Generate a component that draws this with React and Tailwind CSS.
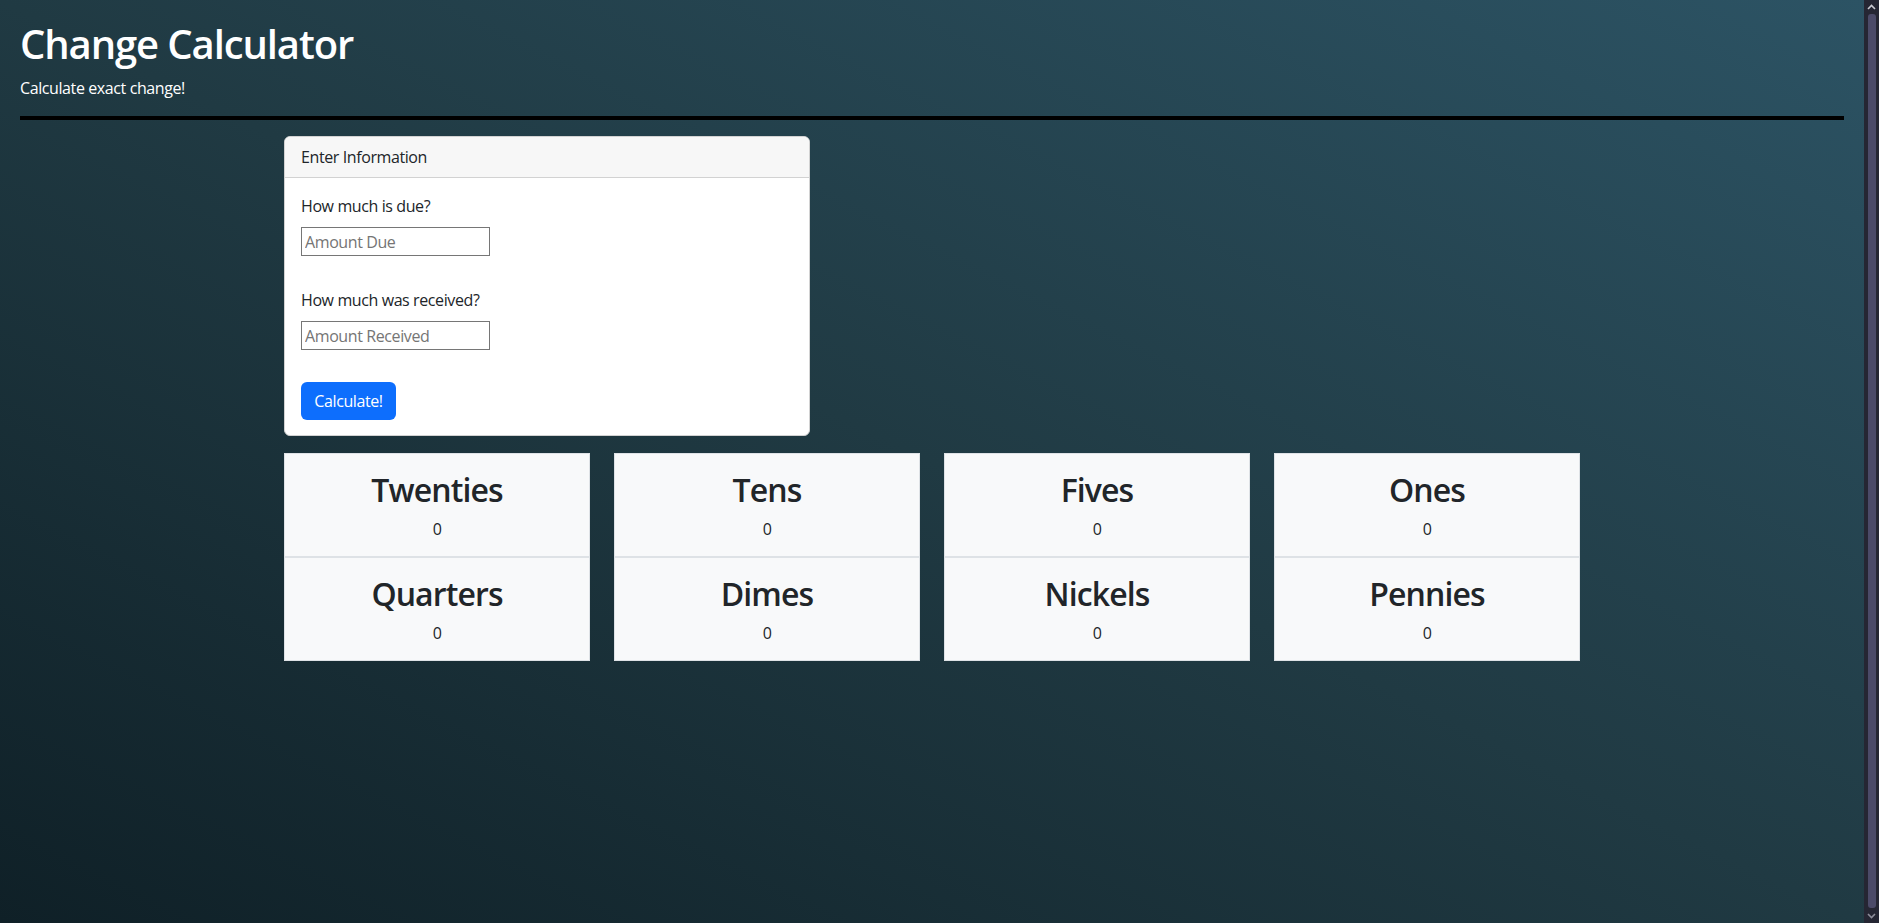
import React from "react";

const denoms = [
  ["Twenties", "Quarters"],
  ["Tens", "Dimes"],
  ["Fives", "Nickels"],
  ["Ones", "Pennies"],
];

function ResultBox({ title }) {
  return (
    <div className="h-[104px] border border-[#dee2e6] bg-[#f8f9fa] pt-[17px] text-center text-[#212529]">
      <h2 className="text-[32px] font-semibold leading-[38px] tracking-[-0.9px]">{title}</h2>
      <p className="mt-2 text-base leading-6">0</p>
    </div>
  );
}

function Scrollbar() {
  return (
    <div className="flex h-full w-[15px] shrink-0 flex-col items-center bg-[#252633]">
      <div className="flex h-[14px] w-full items-center justify-center">
        <svg width="9" height="6" viewBox="0 0 9 6" fill="none">
          <path d="M1 5 L4.5 1.5 L8 5" stroke="#c9c9d1" strokeWidth="1.6" />
        </svg>
      </div>
      <div className="w-[8px] flex-1 rounded-[3px] bg-[#4b4a68]" />
      <div className="flex h-[15px] w-full items-center justify-center">
        <svg width="9" height="6" viewBox="0 0 9 6" fill="none">
          <path d="M1 1 L4.5 4.5 L8 1" stroke="#8d8d9a" strokeWidth="1.6" />
        </svg>
      </div>
    </div>
  );
}

export default function App() {
  return (
    <div className="flex h-[923px] w-full overflow-hidden font-['Open_Sans',sans-serif] tracking-[-0.4px]">
      <div className="flex-1 bg-[linear-gradient(to_top_right,#0f2027,#203a43,#2c5364)] px-5 pt-5">
        <h1 className="text-[40px] font-semibold leading-[48px] tracking-[-1.1px] text-white">Change Calculator</h1>
        <p className="mt-2 text-base leading-6 text-white">Calculate exact change!</p>
        <div className="mt-4 h-[4px] w-full bg-black" />
        <div className="mx-auto mt-4 w-[1320px] px-3">
          <div className="w-[526px] overflow-hidden rounded-[6px] border border-[#d2d2d2] bg-white text-[#212529]">
            <div className="border-b border-[#d2d2d2] bg-[#f7f7f7] px-4 py-2 text-base leading-6">
              Enter Information
            </div>
            <div className="flex flex-col items-start px-4 pb-[15px] pt-4">
              <label className="text-base leading-6">How much is due?</label>
              <input
                type="text"
                placeholder="Amount Due"
                className="mt-[9px] h-[29px] w-[189px] border border-[#767676] px-[3px] text-base leading-6 placeholder:text-[#757575]"
              />
              <label className="mt-8 text-base leading-6">How much was received?</label>
              <input
                type="text"
                placeholder="Amount Received"
                className="mt-[9px] h-[29px] w-[189px] border border-[#767676] px-[3px] text-base leading-6 placeholder:text-[#757575]"
              />
              <button className="mt-8 flex h-[38px] w-[95px] items-center justify-center rounded-[6px] bg-[#0d6efd] text-base leading-6 text-white">
                Calculate!
              </button>
            </div>
          </div>
          <div className="mt-[17px] grid grid-cols-4 gap-6">
            {denoms.map(([a, b]) => (
              <div key={a} className="flex flex-col">
                <ResultBox title={a} />
                <ResultBox title={b} />
              </div>
            ))}
          </div>
        </div>
      </div>
      <Scrollbar />
    </div>
  );
}
